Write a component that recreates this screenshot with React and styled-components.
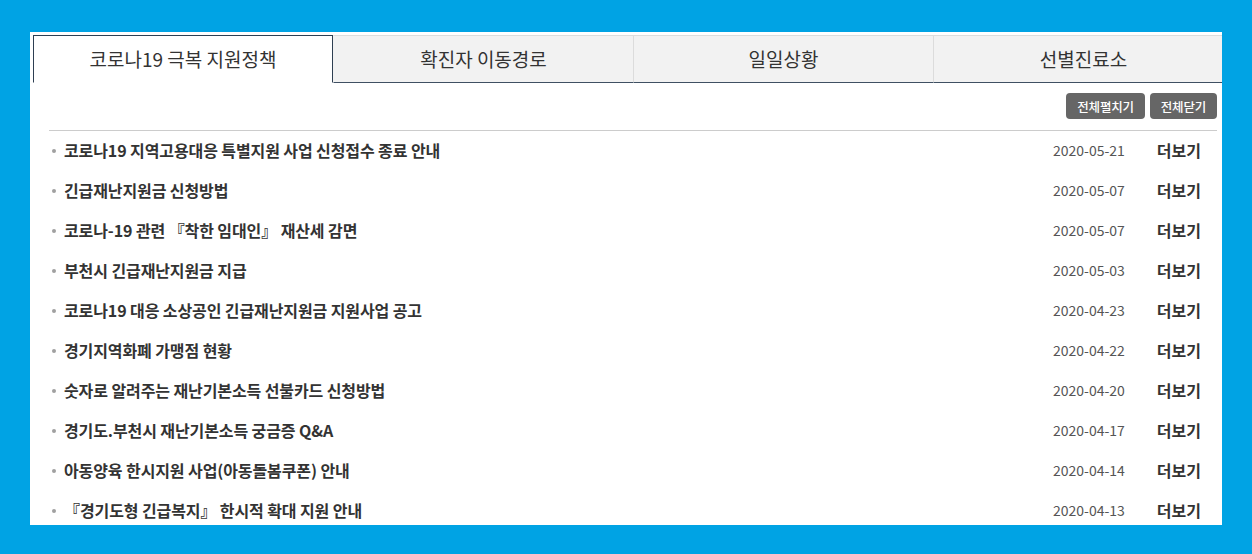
import React from "react";
import styled, { createGlobalStyle } from "styled-components";

const Global = createGlobalStyle`
  html, body { margin: 0; padding: 0; background: #00a3e4; }
  body { font-family: "Noto Sans CJK KR", "Noto Sans", sans-serif; }
  * { box-sizing: border-box; }
`;

const Stage = styled.div`
  padding: 32px 30px 0 30px;
  height: 554px;
`;

const Panel = styled.div`
  background: #fff;
  width: 1192px;
  height: 493px;
  overflow: hidden;
  padding: 3px 0 0 3px;
`;

const TabBar = styled.div`
  display: flex;
  width: 1200px;
`;

const Tab = styled.div`
  flex: 0 0 300px;
  height: 48px;
  display: flex;
  align-items: center;
  justify-content: center;
  font-size: 19px;
  color: #333;
  background: ${(p) => (p.$active ? "#fff" : "#f2f2f2")};
  border-top: 1px solid ${(p) => (p.$active ? "#2e3f52" : "#dcdcdc")};
  border-left: 1px solid ${(p) => (p.$active ? "#2e3f52" : p.$afterActive ? "transparent" : "#dcdcdc")};
  border-right: ${(p) => (p.$active ? "1px solid #2e3f52" : "none")};
  border-bottom: 1px solid ${(p) => (p.$active ? "#fff" : "#3f5063")};
  padding-bottom: 2px;
`;

const Content = styled.div`
  margin: 0 5px 0 16px;
`;

const Toolbar = styled.div`
  display: flex;
  justify-content: flex-end;
  gap: 5px;
  padding: 10px 0 11px;
  border-bottom: 1px solid #cccccc;
`;

const ToolButton = styled.button`
  height: 26px;
  padding: 0 11px;
  border: none;
  border-radius: 4px;
  background: #666;
  color: #fff;
  font-family: inherit;
  font-size: 12.5px;
  font-weight: 500;
  cursor: pointer;
  letter-spacing: -0.2px;
`;

const List = styled.ul`
  list-style: none;
  margin: 0;
  padding: 0;
`;

const Row = styled.li`
  height: 40px;
  display: flex;
  align-items: center;
  padding: 0 0 2px 3px;
`;

const Bullet = styled.span`
  width: 4px;
  height: 4px;
  border-radius: 50%;
  background: #a0a0a0;
  margin-right: 8px;
  margin-top: 2px;
  flex: none;
`;

const Title = styled.span`
  flex: 1;
  font-size: 16px;
  font-weight: 700;
  color: #333;
  letter-spacing: -0.1px;
`;

const DateText = styled.span`
  font-size: 14px;
  color: #555;
  margin-right: 32px;
`;

const More = styled.span`
  font-size: 16px;
  font-weight: 700;
  color: #333;
  margin-right: 16px;
`;

const tabs = ["코로나19 극복 지원정책", "확진자 이동경로", "일일상황", "선별진료소"];

const items = [
  ["코로나19 지역고용대응 특별지원 사업 신청접수 종료 안내", "2020-05-21"],
  ["긴급재난지원금 신청방법", "2020-05-07"],
  ["코로나-19 관련 『착한 임대인』 재산세 감면", "2020-05-07"],
  ["부천시 긴급재난지원금 지급", "2020-05-03"],
  ["코로나19 대응 소상공인 긴급재난지원금 지원사업 공고", "2020-04-23"],
  ["경기지역화폐 가맹점 현황", "2020-04-22"],
  ["숫자로 알려주는 재난기본소득 선불카드 신청방법", "2020-04-20"],
  ["경기도.부천시 재난기본소득 궁금증 Q&A", "2020-04-17"],
  ["아동양육 한시지원 사업(아동돌봄쿠폰) 안내", "2020-04-14"],
  ["『경기도형 긴급복지』 한시적 확대 지원 안내", "2020-04-13"],
];

export default function App() {
  return (
    <>
      <Global />
      <Stage>
        <Panel>
          <TabBar>
            {tabs.map((t, i) => (
              <Tab key={t} $active={i === 0} $afterActive={i === 1}>
                {t}
              </Tab>
            ))}
          </TabBar>
          <Content>
            <Toolbar>
              <ToolButton>전체펼치기</ToolButton>
              <ToolButton>전체닫기</ToolButton>
            </Toolbar>
            <List>
              {items.map(([title, date]) => (
                <Row key={title}>
                  <Bullet />
                  <Title>{title}</Title>
                  <DateText>{date}</DateText>
                  <More>더보기</More>
                </Row>
              ))}
            </List>
          </Content>
        </Panel>
      </Stage>
    </>
  );
}
